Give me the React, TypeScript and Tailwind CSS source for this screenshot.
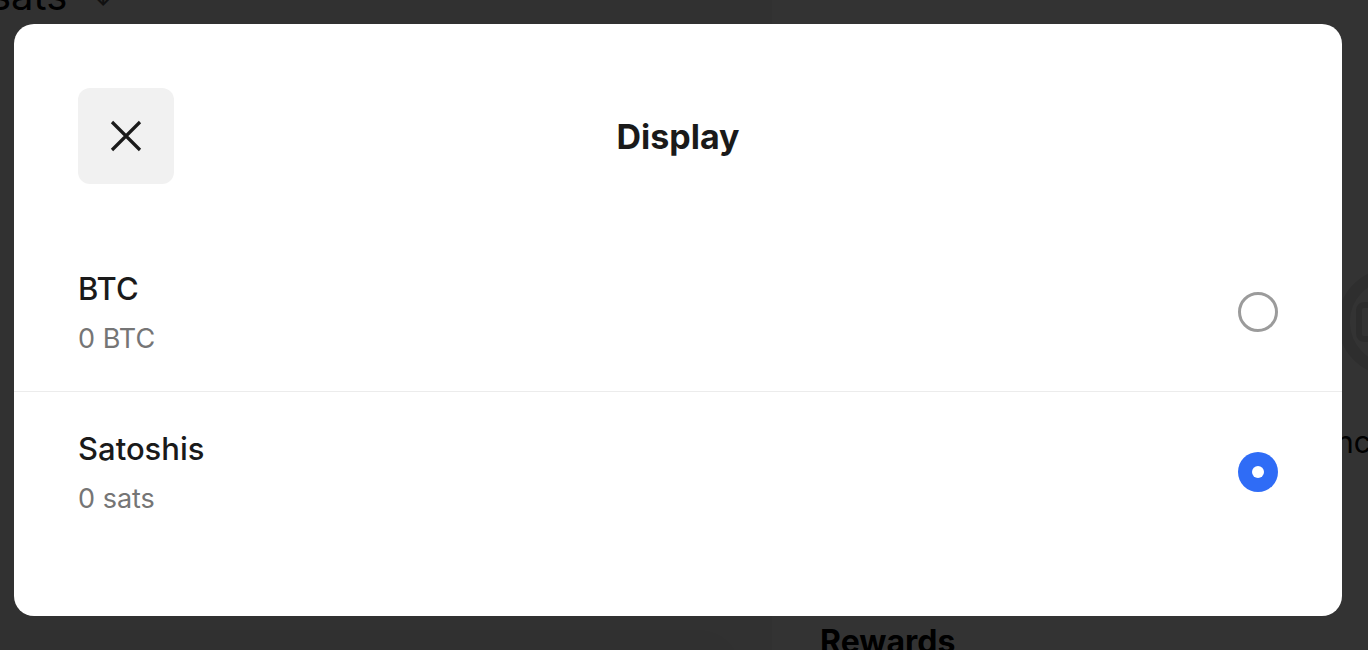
import React from "react";

function Radio({ selected }: { selected: boolean }) {
  if (selected) {
    return (
      <div className="w-10 h-10 rounded-full bg-[#2f6cf6] flex items-center justify-center shrink-0">
        <div className="w-3 h-3 rounded-full bg-white" />
      </div>
    );
  }
  return <div className="w-10 h-10 rounded-full border-[3px] border-[#9b9b9b] shrink-0" />;
}

function Row({ title, sub, selected, divider }: { title: string; sub: string; selected: boolean; divider?: boolean }) {
  return (
    <div className={`flex items-center justify-between px-16 h-[160px] ${divider ? "border-b border-[#ececec]" : ""}`}>
      <div className="flex flex-col pt-[4px]">
        <div className="text-[31px] leading-[40px] font-medium text-[#1a1a1a]">{title}</div>
        <div className="mt-[10px] text-[27px] leading-[40px] text-[#757575]">{sub}</div>
      </div>
      <Radio selected={selected} />
    </div>
  );
}

export default function App() {
  return (
    <div className="relative w-[1368px] h-[650px] overflow-hidden bg-white" style={{ fontFamily: "Inter, 'Noto Sans', sans-serif" }}>
      {/* underlying page */}
      <div className="flex h-full">
        <div className="w-[772px] flex flex-col justify-between bg-[#f6f6f6]">
          <div className="flex items-center gap-6 -mt-[28px] -ml-[10px]">
            <span className="text-[40px] leading-[48px] text-black">sats</span>
            <span className="text-[28px] text-[#555]">↓</span>
          </div>
          <div className="ml-[-40px] mb-[-40px] w-[780px] h-[60px] rounded-tr-[40px] bg-[#eeeeee]" />
        </div>
        <div className="flex-1 flex flex-col justify-end pl-12">
          <div className="text-[32px] font-bold text-black -mb-[16px]">Rewards</div>
        </div>
      </div>
      <div className="absolute left-[1338px] top-[268px] w-[108px] h-[108px] rounded-full border-[12px] border-[#e4e4e4] flex items-center">
        <div className="ml-[6px] w-[40px] h-[40px] rounded-[8px] border-[6px] border-[#dcdcdc]" />
      </div>
      <div className="absolute left-[1336px] top-[420px] text-[30px] text-black">nc</div>

      {/* overlay */}
      <div className="absolute inset-0 bg-black/80 pt-[24px] pl-[14px]">
        <div className="bg-white rounded-[20px] w-[1328px] h-[592px] flex flex-col">
          <div className="relative flex items-center justify-center pt-16 px-16">
            <button className="absolute left-16 top-16 w-24 h-24 rounded-[12px] bg-[#f1f1f1] flex items-center justify-center">
              <svg width="32" height="32" viewBox="0 0 32 32" fill="none" stroke="#1a1a1a" strokeWidth="3.2" strokeLinecap="butt">
                <path d="M2 2 L30 30 M30 2 L2 30" />
              </svg>
            </button>
            <div className="h-24 flex items-center text-[34px] font-bold text-[#1a1a1a]">Display</div>
          </div>
          <div className="mt-12">
            <Row title="BTC" sub="0 BTC" selected={false} divider />
            <Row title="Satoshis" sub="0 sats" selected />
          </div>
        </div>
      </div>
    </div>
  );
}
